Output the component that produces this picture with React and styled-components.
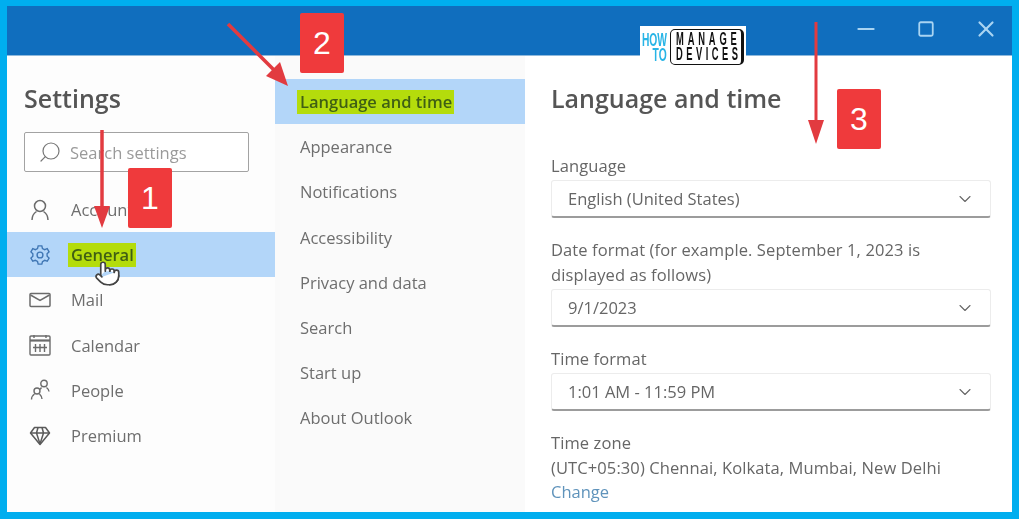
import React from 'react';
import styled, { createGlobalStyle } from 'styled-components';
import { ChevronDown, Minus, Pointer, Square, X, Search as SearchIcon } from 'lucide-react';

const GlobalStyle = createGlobalStyle`
  html, body {
    margin: 0;
    padding: 0;
    background: #00aeef;
  }
  * {
    box-sizing: border-box;
  }
`;

const navItems = [
  { label: 'Accounts', icon: <UserGlyph /> },
  { label: 'General', icon: <GearGlyph />, active: true },
  { label: 'Mail', icon: <MailGlyph /> },
  { label: 'Calendar', icon: <CalendarGlyph /> },
  { label: 'People', icon: <PeopleGlyph /> },
  { label: 'Premium', icon: <GemGlyph /> },
];

const subItems = [
  'Appearance',
  'Notifications',
  'Accessibility',
  'Privacy and data',
  'Search',
  'Start up',
  'About Outlook',
];

function UserGlyph() {
  return (
    <svg width="20" height="22" viewBox="0 0 20 22" fill="none" stroke="#6b6b6b" strokeWidth="1.5">
      <circle cx="10" cy="7" r="5.5" />
      <path d="M2 21c0-5 3-7.5 4.5-8.5M18 21c0-5-3-7.5-4.5-8.5" />
    </svg>
  );
}

function GearGlyph() {
  return (
    <svg width="22" height="22" viewBox="0 0 24 24" fill="none" stroke="#3f76b4" strokeWidth="1.5">
      <path d="M10 2h4l.7 3 2.4 1.2 2.8-1.1 2 3.5-2.2 2 .1 2.8 2.1 2-2 3.4-2.8-1-2.4 1.4-.7 2.8h-4l-.7-2.9-2.4-1.3-2.8 1-2-3.4 2.1-2v-2.8l-2.1-2 2-3.5 2.8 1.1L9.3 5z" />
      <circle cx="12" cy="12" r="3.2" />
    </svg>
  );
}

function MailGlyph() {
  return (
    <svg width="22" height="16" viewBox="0 0 22 16" fill="none" stroke="#6b6b6b" strokeWidth="1.5">
      <rect x="1" y="1.5" width="20" height="13" rx="1" />
      <path d="M1.5 3l9.5 5.5L20.5 3" />
    </svg>
  );
}

function CalendarGlyph() {
  return (
    <svg width="22" height="22" viewBox="0 0 22 22" fill="none" stroke="#6b6b6b" strokeWidth="1.4">
      <rect x="1" y="2" width="20" height="19" rx="1" />
      <path d="M1 6.5h20" strokeWidth="2.2" />
      <path d="M5 1v3M17 1v3M6.5 10v8M11 10v8M15.5 10v8M4 13.5h14" />
    </svg>
  );
}

function PeopleGlyph() {
  return (
    <svg width="20" height="22" viewBox="0 0 20 22" fill="none" stroke="#6b6b6b" strokeWidth="1.4">
      <circle cx="7" cy="12" r="3" />
      <path d="M1.500 20.500c0-3 1.500-4.500 3-5.500M12 20c0-2-1-3.500-2.500-5" />
      <circle cx="14" cy="4.500" r="3.200" />
      <path d="M11.500 8.500c-.5.6-1 1.300-1.300 2M16.500 8.500c1 .8 2.500 2 2.500 4" />
    </svg>
  );
}

function GemGlyph() {
  return (
    <svg width="22" height="20" viewBox="0 0 22 20" fill="none" stroke="#5a5a5a" strokeWidth="1.5" strokeLinejoin="round">
      <path d="M5.500 1.500h11l4 5.500L11 18.500 1.500 7z" />
      <path d="M1.500 7h19M7.500 7L11 18M14.500 7L11 18M7.500 7L9 1.500M14.500 7L13 1.500" />
    </svg>
  );
}

function ArrowOne() {
  return (
    <ArrowSvg $left={92} $top={128} width="20" height="102" viewBox="0 0 20 102">
      <path d="M10 2v82" stroke="#e23b40" strokeWidth="3.500" />
      <path d="M2 78h16L10 100z" fill="#e23b40" />
    </ArrowSvg>
  );
}

function ArrowTwo() {
  return (
    <ArrowSvg $left={222} $top={18} width="72" height="72" viewBox="0 0 72 72">
      <path d="M6 6l50 50" stroke="#e23b40" strokeWidth="3.500" />
      <path d="M44 58L58 44l8 24z" fill="#e23b40" />
    </ArrowSvg>
  );
}

function ArrowThree() {
  return (
    <ArrowSvg $left={806} $top={20} width="20" height="126" viewBox="0 0 20 126">
      <path d="M10 2v106" stroke="#e23b40" strokeWidth="3" />
      <path d="M2 100h16l-8 24z" fill="#e23b40" />
    </ArrowSvg>
  );
}

function Dropdown({ value }) {
  return (
    <Select>
      <span>{value}</span>
      <ChevronDown size={20} strokeWidth={1.3} color="#666" />
    </Select>
  );
}

export default function App() {
  return (
    <Page>
      <GlobalStyle />
      <Window>
        <TitleBar>
          <WindowButton><Minus size={26} strokeWidth={2} /></WindowButton>
          <WindowButton><Square size={18} strokeWidth={2.4} /></WindowButton>
          <WindowButton><X size={26} strokeWidth={2} /></WindowButton>
        </TitleBar>
        <Body>
          <LeftPane>
            <PaneTitle>Settings</PaneTitle>
            <SearchBox>
              <SearchIcon size={24} strokeWidth={1.2} color="#777" style={{ transform: 'scaleX(-1)' }} />
              <span>Search settings</span>
            </SearchBox>
            <NavList>
              {navItems.map((item) => (
                <NavRow key={item.label} $active={item.active}>
                  <NavIcon>{item.icon}</NavIcon>
                  {item.active ? <Marked>{item.label}</Marked> : <span>{item.label}</span>}
                </NavRow>
              ))}
            </NavList>
          </LeftPane>
          <MiddlePane>
            <SubRow $active>
              <Marked>Language and time</Marked>
            </SubRow>
            {subItems.map((item) => (
              <SubRow key={item}>{item}</SubRow>
            ))}
          </MiddlePane>
          <RightPane>
            <PaneTitle $wide>Language and time</PaneTitle>
            <Field $first>
              <FieldLabel>Language</FieldLabel>
              <Dropdown value="English (United States)" />
            </Field>
            <Field>
              <FieldLabel>Date format (for example. September 1, 2023 is displayed as follows)</FieldLabel>
              <Dropdown value="9/1/2023" />
            </Field>
            <Field>
              <FieldLabel>Time format</FieldLabel>
              <Dropdown value="1:01 AM - 11:59 PM" />
            </Field>
            <Field>
              <FieldLabel>Time zone</FieldLabel>
              <FieldLabel>(UTC+05:30) Chennai, Kolkata, Mumbai, New Delhi</FieldLabel>
              <ChangeLink>Change</ChangeLink>
            </Field>
          </RightPane>
        </Body>
      </Window>

      <ArrowOne />
      <ArrowTwo />
      <ArrowThree />
      <StepBadge $left={128} $top={168}>1</StepBadge>
      <StepBadge $left={300} $top={13}>2</StepBadge>
      <StepBadge $left={837} $top={89}>3</StepBadge>
      <HandCursor>
        <Pointer size={27} strokeWidth={1.5} color="#444" fill="#fff" />
      </HandCursor>
      <Logo>
        <LogoHow>
          <span>HOW</span>
          <span>TO</span>
        </LogoHow>
        <LogoBox>
          <LogoWord $spacing={7.4}>MANAGE</LogoWord>
          <LogoWord $spacing={6.7}>DEVICES</LogoWord>
        </LogoBox>
      </Logo>
    </Page>
  );
}

const Page = styled.div`
  position: relative;
  width: 1019px;
  height: 519px;
  padding: 6px 7px 7px;
  overflow: hidden;
  background: #00aeef;
  font-family: 'Open Sans', 'Liberation Sans', sans-serif;
`;

const Window = styled.div`
  display: flex;
  flex-direction: column;
  height: 100%;
  background: #fff;
  filter: blur(0.5px);
`;

const TitleBar = styled.div`
  display: flex;
  justify-content: flex-end;
  align-items: flex-start;
  gap: 20px;
  flex: 0 0 50px;
  padding: 13px 6px 0 0;
  background: #106ebe;
  border-bottom: 1px solid #8fb9dc;
`;

const WindowButton = styled.div`
  display: flex;
  align-items: center;
  justify-content: center;
  width: 40px;
  height: 20px;
  color: #a9d4f2;
`;

const Body = styled.div`
  display: flex;
  flex: 1;
  min-height: 0;
`;

const LeftPane = styled.div`
  flex: 0 0 268px;
  padding-top: 23px;
  background: #fdfdfd;
`;

const PaneTitle = styled.h1`
  margin: 0;
  height: 38px;
  padding-left: ${(p) => (p.$wide ? '0' : '17px')};
  font-size: 25px;
  font-weight: 600;
  line-height: 38px;
  color: #555;
`;

const SearchBox = styled.div`
  display: flex;
  align-items: center;
  gap: 8px;
  width: 225px;
  height: 40px;
  margin: 15px 0 15px 17px;
  padding-left: 13px;
  background: #fff;
  border: 1.5px solid #a3a3a3;
  border-radius: 2px;
  font-size: 16.5px;
  color: #9a9a9a;
`;

const NavList = styled.div`
  display: flex;
  flex-direction: column;
`;

const NavRow = styled.div`
  display: flex;
  align-items: center;
  height: 45.2px;
  padding-left: 22px;
  font-size: 16.5px;
  color: #6e6e6e;
  background: ${(p) => (p.$active ? '#b3d6f9' : 'transparent')};
`;

const NavIcon = styled.div`
  display: flex;
  justify-content: center;
  width: 22px;
  margin-right: 20px;
`;

const Marked = styled.span`
  padding: 2px 2px 2px 3px;
  margin-left: -3px;
  background: #b4dc0c;
  color: #3f5f14;
  font-weight: 600;
  font-size: 16.5px;
  line-height: 20px;
`;

const MiddlePane = styled.div`
  flex: 0 0 250px;
  padding-top: 23px;
  background: #fafafa;
`;

const SubRow = styled.div`
  display: flex;
  align-items: center;
  height: 45.2px;
  padding-left: 25px;
  font-size: 16.5px;
  color: #6e6e6e;
  background: ${(p) => (p.$active ? '#b3d6f9' : 'transparent')};
`;

const RightPane = styled.div`
  flex: 1;
  padding: 23px 21px 0 26px;
  background: #fff;
`;

const Field = styled.div`
  margin-top: ${(p) => (p.$first ? '36px' : '19px')};
`;

const FieldLabel = styled.div`
  font-size: 16.5px;
  letter-spacing: 0.1px;
  line-height: 25px;
  color: #666;
`;

const Select = styled.div`
  display: flex;
  align-items: center;
  justify-content: space-between;
  height: 38px;
  margin-top: 2px;
  padding: 0 15px 0 16px;
  background: #fff;
  border: 1px solid #ececec;
  border-bottom: 2px solid #9c9c9c;
  border-radius: 3px;
  font-size: 16.5px;
  color: #666;
`;

const ChangeLink = styled.div`
  font-size: 16.5px;
  line-height: 24px;
  color: #5f93bb;
`;

const ArrowSvg = styled.svg`
  position: absolute;
  left: ${(p) => p.$left}px;
  top: ${(p) => p.$top}px;
`;

const StepBadge = styled.div`
  position: absolute;
  left: ${(p) => p.$left}px;
  top: ${(p) => p.$top}px;
  display: flex;
  align-items: center;
  justify-content: center;
  width: 44px;
  height: 60px;
  background: #ef3a3c;
  border-radius: 2px;
  font-family: 'Liberation Sans', sans-serif;
  font-size: 32px;
  color: #fff;
`;

const HandCursor = styled.div`
  position: absolute;
  left: 94px;
  top: 260px;
  display: flex;
`;

const Logo = styled.div`
  position: absolute;
  left: 640px;
  top: 26px;
  display: flex;
  align-items: flex-end;
  width: 106px;
  height: 39px;
  background: #fff;
`;

const LogoHow = styled.div`
  display: flex;
  flex-direction: column;
  align-items: flex-end;
  flex: 0 0 27px;
  min-width: 0;
  margin-right: 3px;
  padding-bottom: 2px;
  font-family: 'Liberation Sans', sans-serif;
  font-size: 18px;
  font-weight: 700;
  line-height: 15px;
  color: #27b4e6;
  span {
    transform: scaleX(0.57);
    transform-origin: right center;
  }
`;

const LogoBox = styled.div`
  display: flex;
  flex-direction: column;
  justify-content: center;
  flex: 0 0 74px;
  min-width: 0;
  height: 36px;
  padding-left: 5px;
  border: 1.5px solid #111;
  border-right-width: 3px;
  border-radius: 5px;
`;

const LogoWord = styled.span`
  display: block;
  width: 64px;
  white-space: nowrap;
  font-family: 'Liberation Sans', sans-serif;
  font-size: 18px;
  font-weight: 700;
  line-height: 15px;
  letter-spacing: ${(p) => p.$spacing}px;
  color: #111;
  transform: scaleX(0.52);
  transform-origin: left center;
`;
